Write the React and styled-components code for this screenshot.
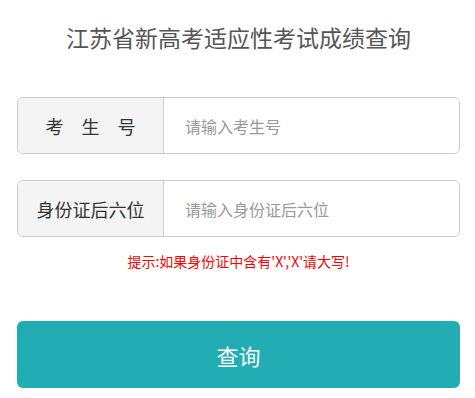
import styled, { createGlobalStyle } from "styled-components";

const Global = createGlobalStyle`
  body {
    margin: 0;
    background: #fff;
    font-family: "Noto Sans CJK SC", "Noto Sans", sans-serif;
  }
`;

const Page = styled.div`
  padding: 0 15px 0 17px;
`;

const Title = styled.h1`
  margin: 0;
  height: 74px;
  line-height: 74px;
  text-align: center;
  font-size: 23px;
  font-weight: 400;
  color: #555;
`;

const Form = styled.div`
  padding-top: 23px;
  display: flex;
  flex-direction: column;
  gap: 26px;
`;

const Group = styled.div`
  display: flex;
  height: 57px;
  box-sizing: border-box;
  border: 1px solid #ccc;
  border-radius: 6px;
  overflow: hidden;
`;

const Addon = styled.span`
  width: 146px;
  flex: none;
  display: flex;
  align-items: center;
  justify-content: center;
  background: #f4f4f4;
  border-right: 1px solid #ccc;
  font-size: 18px;
  color: #333;
  letter-spacing: ${(p) => (p.$wide ? "18px" : "0")};
  padding-left: ${(p) => (p.$wide ? "18px" : "0")};
  box-sizing: border-box;
`;

const Input = styled.input`
  flex: 1;
  min-width: 0;
  border: none;
  outline: none;
  padding: 0 0 0 21px;
  font-family: inherit;
  font-size: 16px;
  color: #333;
  &::placeholder {
    color: #999;
  }
`;

const Hint = styled.p`
  margin: 15px 0 0;
  text-align: center;
  font-size: 14px;
  line-height: 18px;
  color: #f00;
`;

const Submit = styled.button`
  display: block;
  width: 100%;
  height: 67px;
  margin-top: 51px;
  border: none;
  border-radius: 6px;
  background: #22acb3;
  color: #fff;
  font-family: inherit;
  font-size: 22px;
  cursor: pointer;
`;

export default function App() {
  return (
    <Page>
      <Global />
      <Title>江苏省新高考适应性考试成绩查询</Title>
      <Form>
        <Group>
          <Addon $wide>考生号</Addon>
          <Input placeholder="请输入考生号" />
        </Group>
        <Group>
          <Addon>身份证后六位</Addon>
          <Input placeholder="请输入身份证后六位" />
        </Group>
      </Form>
      <Hint>提示:如果身份证中含有'X','X'请大写!</Hint>
      <Submit>查询</Submit>
    </Page>
  );
}
